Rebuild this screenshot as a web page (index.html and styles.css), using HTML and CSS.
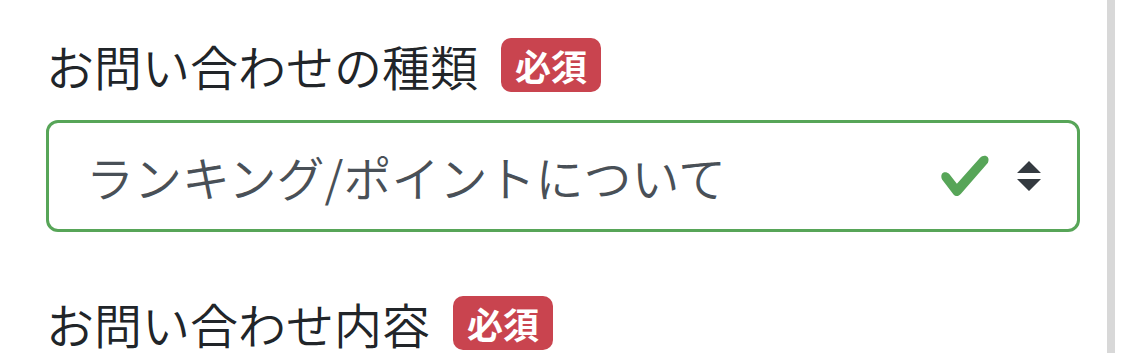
FILE: index.html
```html
<!DOCTYPE html>
<html lang="ja">
<head>
<meta charset="utf-8">
<link rel="stylesheet" href="styles.css">
</head>
<body>
<div class="page">
  <form class="form">
    <div class="group">
      <label class="label"><span class="label-text">お問い合わせの種類</span><span class="badge">必須</span></label>
      <div class="select">
        <span class="select-text">ランキング/ポイントについて</span>
        <svg class="check" viewBox="0 0 8 8" width="54" height="54"><path fill="#57a558" d="M2.3 6.73L.6 4.53c-.4-1.04.46-1.4 1.1-.8l1.1 1.4 3.4-3.8c.6-.63 1.6-.27 1.2.7l-4 4.6c-.43.5-.8.4-1.1.1z"/></svg>
        <svg class="arrows" viewBox="0 0 4 5" width="24" height="30"><path fill="#343a40" d="M2 0L0 2h4zm0 5L0 3h4z"/></svg>
      </div>
    </div>
    <div class="group">
      <label class="label"><span class="label-text">お問い合わせ内容</span><span class="badge">必須</span></label>
    </div>
  </form>
  <div class="strip"></div>
</div>
</body>
</html>
```

FILE: styles.css
```css
* { box-sizing: border-box; }
html, body { margin: 0; padding: 0; background: #fff; }
body {
  font-family: "Noto Sans CJK JP", "Noto Sans", sans-serif;
  color: #212529;
  height: 353px;
  overflow: hidden;
}
.page {
  display: flex;
  height: 353px;
}
.form {
  width: 1080px;
  padding: 29px 0 0 46px;
}
.group { margin-bottom: 55px; }
.label {
  display: flex;
  align-items: center;
  gap: 23px;
  height: 72px;
  font-size: 48px;
  font-weight: 350;
  line-height: 72px;
  margin-bottom: 19px;
}
.badge {
  display: inline-block;
  background: #c9444f;
  color: #fff;
  font-size: 36px;
  font-weight: 700;
  line-height: 1;
  padding: 9px 14px;
  border-radius: 10px;
}
.select {
  display: flex;
  align-items: center;
  height: 112px;
  border: 3px solid #57a558;
  border-radius: 12px;
  padding: 0 36px 0 37px;
  color: #495057;
  font-size: 48px;
  font-weight: 350;
}
.select-text { flex: 1; }
.check { margin-right: 25px; }
.strip {
  margin-left: 27px;
  width: 8px;
  height: 353px;
  background: #d8d8d8;
}
```
